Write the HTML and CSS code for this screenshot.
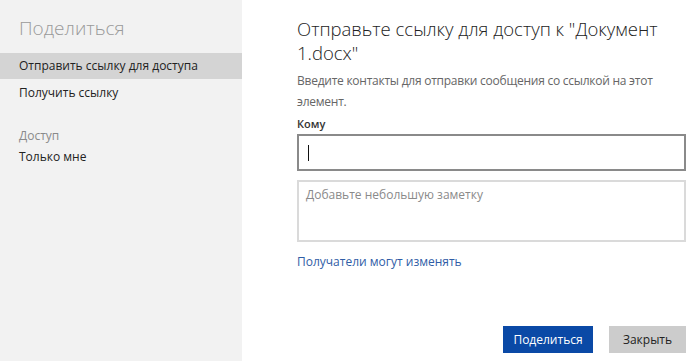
FILE: index.html
```html
<!DOCTYPE html>
<html lang="ru">
<head>
  <meta charset="UTF-8">
  <title>Поделиться</title>
  <link rel="stylesheet" href="styles.css">
</head>
<body>
  <div class="sidebar">
    <h2 class="side-title">Поделиться</h2>
    <div class="side-item selected">Отправить ссылку для доступа</div>
    <div class="side-item">Получить ссылку</div>
    <div class="side-label">Доступ</div>
    <div class="side-item plain">Только мне</div>
  </div>
  <div class="main">
    <h1 class="heading">Отправьте ссылку для доступ к "Документ 1.docx"</h1>
    <p class="hint">Введите контакты для отправки сообщения со ссылкой на этот элемент.</p>
    <label class="field-label" for="to">Кому</label>
    <div class="to-box" id="to"><span class="caret"></span></div>
    <div class="note-box">Добавьте небольшую заметку</div>
    <a class="perm-link" href="#">Получатели могут изменять</a>
    <div class="actions">
      <button class="btn primary">Поделиться</button>
      <button class="btn">Закрыть</button>
    </div>
  </div>
</body>
</html>
```

FILE: styles.css
```css
body {
  margin: 0;
  height: 362px;
  display: flex;
  font-family: 'Open Sans', 'Noto Sans', sans-serif;
  background-color: #fff;
  color: #222;
  overflow: hidden;
}
.sidebar {
  width: 242px;
  height: 361px;
  background-color: #f2f2f2;
  flex-shrink: 0;
}
.side-title {
  margin: 0;
  padding: 16px 0 0 19px;
  height: 37px;
  box-sizing: border-box;
  font-size: 19px;
  line-height: 24px;
  font-weight: 300;
  color: #9a9a9a;
}
.side-item {
  height: 26px;
  line-height: 26px;
  padding-left: 19px;
  font-size: 12px;
  color: #222;
  margin-top: 1px;
}
.side-item.selected {
  margin-top: 16px;
  background-color: #d4d4d4;
}
.side-label {
  margin-top: 20px;
  padding-left: 19px;
  font-size: 12px;
  line-height: 20px;
  color: #8a8a8a;
}
.side-item.plain {
  margin-top: 0;
  height: 22px;
  line-height: 22px;
}
.main {
  flex: 1;
  padding: 17px 14px 0 55px;
  display: flex;
  flex-direction: column;
}
.heading {
  margin: 0;
  font-size: 18.5px;
  line-height: 24px;
  font-weight: 300;
  color: #222;
}
.hint {
  margin: 5px 0 0 0;
  font-size: 12px;
  line-height: 21px;
  letter-spacing: -0.25px;
  color: #666;
}
.field-label {
  margin-top: 4px;
  font-size: 11px;
  line-height: 16px;
  font-weight: 600;
  color: #333;
}
.to-box {
  margin-top: 2px;
  height: 37px;
  border: 2px solid #8a8a8a;
  box-sizing: border-box;
  display: flex;
  align-items: center;
  padding-left: 9px;
}
.caret {
  width: 1px;
  height: 16px;
  background-color: #111;
}
.note-box {
  margin-top: 9px;
  height: 62px;
  border: 2px solid #dadada;
  box-sizing: border-box;
  padding: 4px 0 0 7px;
  font-size: 12px;
  line-height: 18px;
  color: #8a8a8a;
}
.perm-link {
  margin-top: 11px;
  font-size: 12px;
  line-height: 18px;
  color: #2f5da6;
  text-decoration: none;
  align-self: flex-start;
}
.actions {
  margin-top: 55px;
  display: flex;
  justify-content: flex-end;
  gap: 16px;
}
.btn {
  height: 27px;
  padding: 0;
  border: none;
  font-family: inherit;
  font-size: 12px;
  background-color: #cccccc;
  color: #222;
  width: 77px;
}
.btn.primary {
  width: 90px;
  background-color: #0a49a6;
  color: #fff;
}
```
